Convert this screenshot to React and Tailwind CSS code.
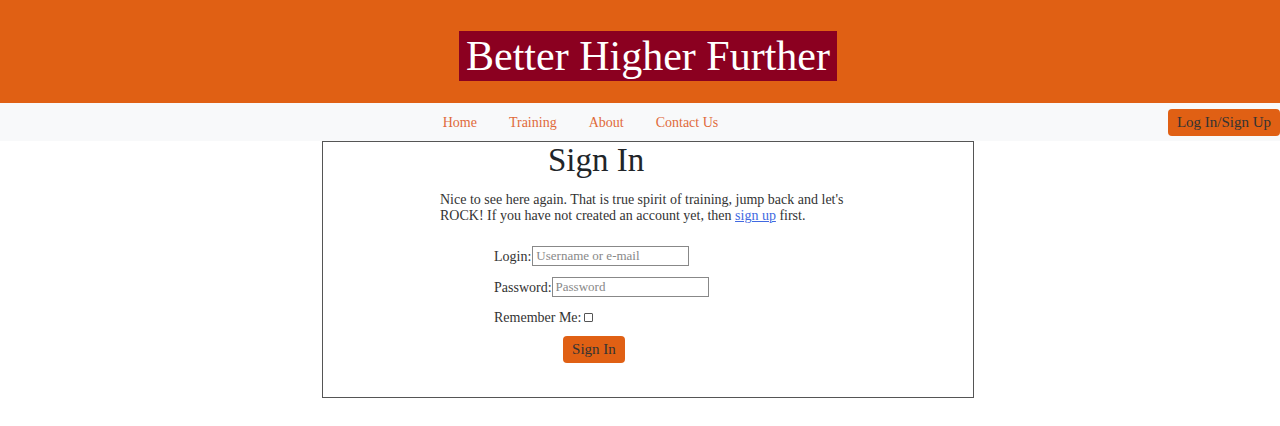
export default function App() {
  const serif = { fontFamily: '"Liberation Serif", "DejaVu Serif", serif' };
  return (
    <div className="w-[1280px] h-[426px] bg-white overflow-hidden" style={serif}>
      <header className="h-[103px] bg-[#e06014] flex items-center justify-center">
        <h1 className="bg-[#8b0020] text-white text-[42px] leading-[50px] h-[50px] px-[7px] mt-[9px] ml-[16px]">
          Better Higher Further
        </h1>
      </header>
      <nav className="h-[38px] bg-[#f8f9fa] relative flex items-center justify-center">
        <ul className="flex items-center text-[14px] text-[#e06a3a] ml-[-119px]">
          <li className="px-[16px]">Home</li>
          <li className="px-[16px]">Training</li>
          <li className="px-[16px]">About</li>
          <li className="px-[16px]">Contact Us</li>
        </ul>
        <button className="absolute right-0 top-[6px] h-[27px] w-[112px] rounded-[4px] bg-[#e06014] text-[#333] text-[15px]">
          Log In/Sign Up
        </button>
      </nav>
      <main className="ml-[322px] w-[652px] h-[257px] border border-[#555] flex flex-col">
        <h2 className="text-[33px] leading-[34px] text-[#212529] ml-[225px] mt-[1px]">Sign In</h2>
        <p className="ml-[117px] mt-[15px] w-[410px] text-[14px] leading-[16px] text-[#333]">
          Nice to see here again. That is true spirit of training, jump back and let's ROCK! If you have not created an account yet, then <a className="text-[#4169e1] underline">sign up</a> first.
        </p>
        <form className="ml-[171px] mt-[22px] flex flex-col text-[14px] text-[#333]">
          <label className="flex items-center h-[20px]">
            Login:
            <input className="ml-[1px] w-[157px] h-[20px] border border-[#888] px-[3px] text-[13px] placeholder:text-[#888]" placeholder="Username or e-mail" style={serif} />
          </label>
          <label className="flex items-center h-[20px] mt-[11px]">
            Password:
            <input className="ml-[0px] w-[157px] h-[20px] border border-[#888] px-[3px] text-[13px] placeholder:text-[#888]" placeholder="Password" style={serif} />
          </label>
          <label className="flex items-center h-[20px] mt-[10px]">
            Remember Me:
            <span className="ml-[3px] inline-block w-[9px] h-[9px] border border-[#555] rounded-[1px]"></span>
          </label>
          <button type="button" className="ml-[69px] mt-[9px] w-[62px] h-[27px] rounded-[4px] bg-[#e06014] text-[#333] text-[15px]">
            Sign In
          </button>
        </form>
      </main>
    </div>
  );
}
